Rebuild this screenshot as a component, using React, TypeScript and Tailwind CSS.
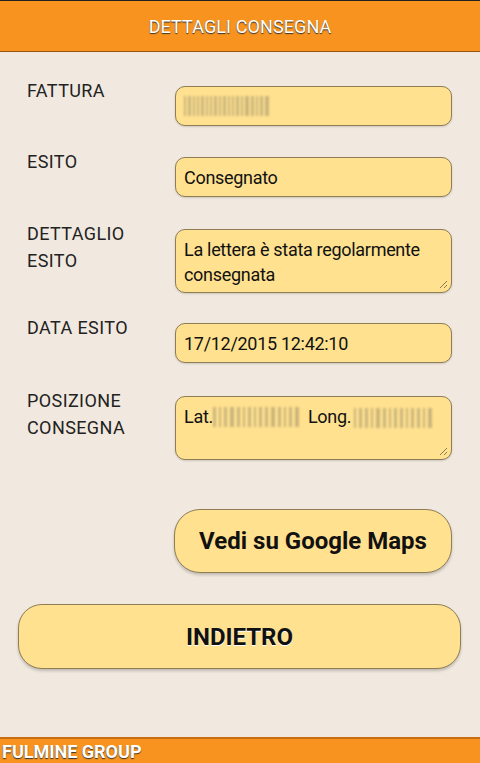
import React from "react";

const font = { fontFamily: "Roboto, 'Liberation Sans', sans-serif" };

const Blur = ({ bars, gap = 2 }: { bars: number[]; gap?: number }) => (
  <span className="inline-flex items-center align-middle blur-[1px] h-[20px]" style={{ gap }}>
    {bars.map((w, i) => (
      <span key={i} className="h-[20px] bg-[#a89770] opacity-60" style={{ width: w }} />
    ))}
  </span>
);

const Grip = () => (
  <svg className="absolute right-[3px] bottom-[3px]" width="10" height="10" viewBox="0 0 10 10">
    <path d="M9 2 L2 9 M9 6 L6 9" stroke="#8a7a55" strokeWidth="1" fill="none" />
  </svg>
);

const Field = ({
  label,
  tall,
  children,
}: {
  label: React.ReactNode;
  tall?: boolean;
  children: React.ReactNode;
}) => (
  <div className="grid grid-cols-[148px_1fr] items-start">
    <div className="text-[18px] leading-[27px] tracking-[0.4px] text-[#222] -mt-[9px]">{label}</div>
    <div
      className={`relative rounded-[10px] border border-[#8f7d55] bg-[#ffe18f] px-[8px] text-[18px] tracking-[-0.3px] text-[#111] shadow-[0_1px_2px_rgba(0,0,0,0.15)] ${
        tall ? "h-[64px] pt-[7px] leading-[25px]" : "h-[40px] flex items-center"
      }`}
    >
      {children}
      {tall && <Grip />}
    </div>
  </div>
);

export default function App() {
  return (
    <div className="w-[480px] h-[763px] bg-[#f1e9df] flex flex-col overflow-hidden" style={font}>
      <header className="h-[52px] bg-[#f7931e] border-t border-[#222] border-b border-b-[#9a5412] flex items-center justify-center">
        <h1 className="text-[18px] tracking-[0.1px] text-white [text-shadow:0_1px_1px_#333]">DETTAGLI CONSEGNA</h1>
      </header>

      <main className="flex-1 flex flex-col pl-[27px] pr-[28px] pt-[34px]">
        <div className="flex flex-col">
          <Field label="FATTURA">
            <Blur bars={[2, 3, 2, 2, 3, 2, 2, 3, 2, 3, 2, 2, 3, 2, 4, 3, 2, 3, 4]} />
          </Field>
          <div className="h-[31px]" />
          <Field label="ESITO">Consegnato</Field>
          <div className="h-[32px]" />
          <Field
            label={
              <>
                DETTAGLIO
                <br />
                ESITO
              </>
            }
            tall
          >
            La lettera è stata regolarmente consegnata
          </Field>
          <div className="h-[30px]" />
          <Field label="DATA ESITO">17/12/2015 12:42:10</Field>
          <div className="h-[33px]" />
          <Field
            label={
              <>
                POSIZIONE
                <br />
                CONSEGNA
              </>
            }
            tall
          >
            <span className="inline-flex items-center">
              Lat.
              <Blur gap={3} bars={[3, 2, 3, 4, 3, 2, 3, 2, 3, 3, 4, 3, 2, 3, 4]} />
              <span className="ml-[9px]">Long.</span>
              <span className="ml-[3px]">
                <Blur gap={3} bars={[2, 3, 3, 2, 4, 3, 2, 3, 3, 2, 3, 3, 2, 4]} />
              </span>
            </span>
          </Field>
        </div>

        <div className="mt-[49px] flex justify-end">
          <button className="w-[278px] h-[64px] rounded-[26px] border border-[#8f7d55] bg-[#ffe18f] text-[24px] font-bold text-[#111] shadow-[0_2px_3px_rgba(0,0,0,0.2)]">
            Vedi su Google Maps
          </button>
        </div>

        <button className="mt-[31px] -ml-[9px] -mr-[9px] h-[65px] rounded-[24px] border border-[#8f7d55] bg-[#ffe18f] text-[24px] font-bold text-[#111] shadow-[0_2px_3px_rgba(0,0,0,0.2)] [text-shadow:0_1px_0_#fff]">
          INDIETRO
        </button>
      </main>

      <footer className="h-[26px] bg-[#f7931e] border-t-2 border-[#c96e10] flex items-center pl-[2px]">
        <span className="text-[18px] font-bold text-white [text-shadow:0_1px_1px_#333]">FULMINE GROUP</span>
      </footer>
    </div>
  );
}
